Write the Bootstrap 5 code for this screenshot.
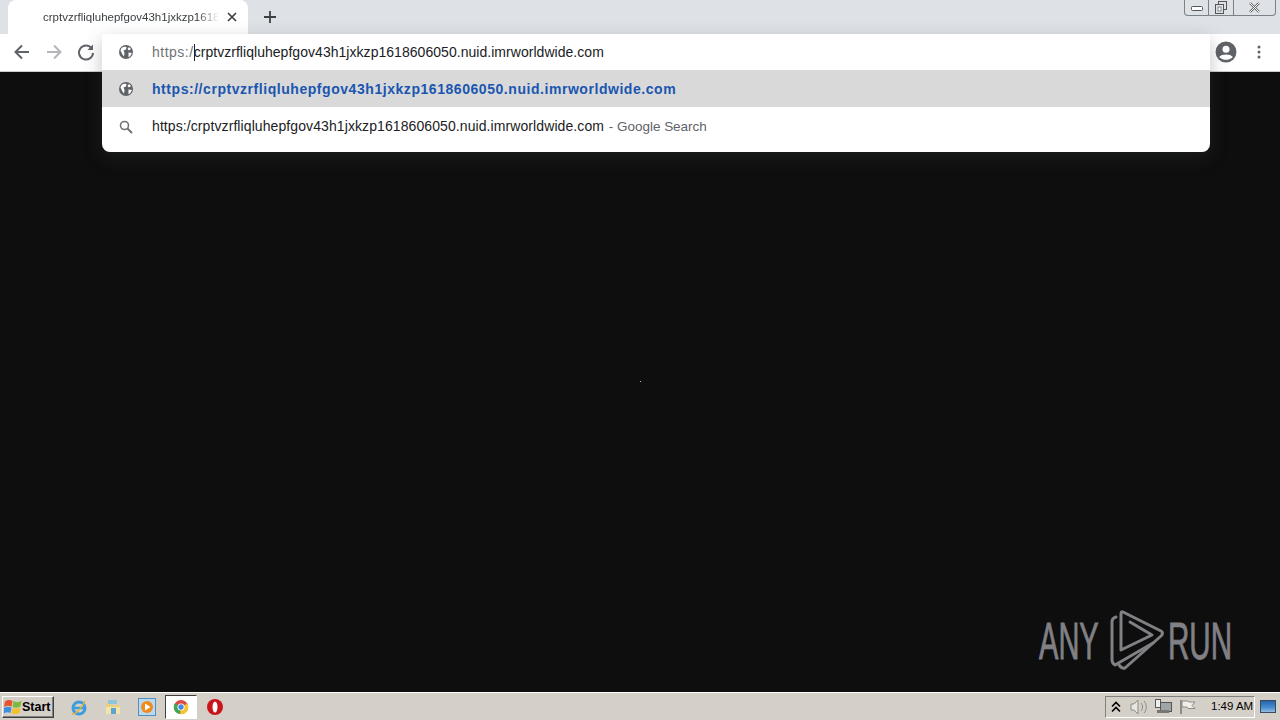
<!DOCTYPE html>
<html lang="en">
<head>
  <meta charset="UTF-8" />
  <meta name="viewport" content="width=device-width, initial-scale=1.0" />
  <title>crptvzrfliqluhepfgov43h1jxkzp1618606050.nuid.imrworldwide.com</title>
  <link href="https://cdn.jsdelivr.net/npm/bootstrap@5.3.3/dist/css/bootstrap.min.css" rel="stylesheet">
  <style>
    html, body { height: 100%; }
    body { font-family: "Liberation Sans", Arial, sans-serif; background: #0e0e0e; }
    .tab-strip { height: 34px; background: #dee1e6; padding-left: 8px; }
    .tab-item { width: 240px; height: 34px; background: #fff; border-radius: 8px 8px 0 0; padding-left: 35px; font-size: 11.5px; color: #3c4043; }
    .tab-title { width: 176px; padding-top: 1px; white-space: nowrap; overflow: hidden; -webkit-mask-image: linear-gradient(90deg, #000 88%, transparent); mask-image: linear-gradient(90deg, #000 88%, transparent); }
    .tab-close { margin-left: 7px; }
    .new-tab { margin-left: 14px; }
    .win-btns { height: 16px; margin-right: 4px; border: 1px solid #7c8087; border-top: 0; border-radius: 0 0 4px 4px; }
    .win-btn { height: 15px; border-right: 1px solid #7c8087; }
    .win-btn:last-child { border-right: 0; }
    .win-min { width: 24px; }
    .win-max { width: 25px; }
    .win-close { width: 41px; }
    .tool-bar { height: 38px; background: #fff; border-bottom: 1px solid #c9cbcf; padding-bottom: 2px; }
    .tool-icon { width: 22px; height: 22px; }
    .back-group { padding-left: 11px; gap: 10px; }
    .tool-end { margin-right: 19px; gap: 20px; }
    .screen-area { background: #0e0e0e; }
    .omni-panel { left: 102px; top: 34px; width: 1108px; background: #fff; border-radius: 0 0 8px 8px; box-shadow: 0 6px 18px rgba(60, 64, 67, .3); font-size: 14px; letter-spacing: .09px; z-index: 5; }
    .omni-row { height: 37px; padding-left: 16px; color: #202124; }
    .omni-row:first-child { height: 36px; }
    .omni-row:last-child { height: 45px; padding-bottom: 6px; }
    .omni-row.is-active { background: #d9d9d9; padding-top: 1px; }
    .omni-icon { width: 16px; height: 16px; margin-right: 18px; flex: none; }
    .scheme-dim { color: #6f7276; letter-spacing: .5px; }
    .caret-line { display: inline-block; width: 1px; height: 17px; background: #202124; vertical-align: -4px; margin: 0 -1px 0 0; }
    .host-tight { letter-spacing: .04px; }
    .omni-url { color: #1a56b0; font-weight: 700; font-size: 14px; letter-spacing: .55px; }
    .omni-hint { color: #5f6368; margin-left: 1px; font-size: 13.5px; letter-spacing: -.02px; }
    .dot-mark { left: 640px; top: 309px; width: 1px; height: 1px; background: #bbb; }
    .wm-mark { right: 43px; bottom: 18px; }
    .task-bar { height: 28px; background: #d4d0c8; border-top: 1px solid #fff; box-shadow: 0 -1px 0 #9a9a94; font-size: 12px; color: #000; }
    .start-btn { width: 52px; height: 22px; margin-left: 2px; background: #d4d0c8; border: 1px solid; border-color: #fff #404040 #404040 #fff; box-shadow: inset -1px -1px 0 #808080; font: 700 12.5px "Liberation Sans", Arial, sans-serif; padding: 0 0 0 1px; color: #000; gap: 0; }
    .quick-launch { margin-left: 16px; gap: 16px; }
    .quick-icon { width: 18px; height: 18px; flex: none; }
    .chrome-slot { width: 32px; height: 24px; margin: 0 -7px; background: #fff; border: 1px solid; border-color: #404040 #fff #fff #404040; }
    .chrome-icon { width: 16px; height: 16px; }
    .tray-box { width: 150px; height: 22px; margin-right: 5px; border: 1px solid; border-color: #808080 #fff #fff #808080; padding-left: 3px; gap: 7px; }
    .tray-chevron, .tray-speaker { margin-left: 2px; }
    .tray-clock { margin-left: 8px; font-size: 11.5px; white-space: nowrap; }
    .show-desk { margin-right: 4px; }
  </style>
</head>
<body class="d-flex flex-column overflow-hidden position-relative">

  <div class="tab-strip d-flex align-items-start flex-shrink-0">
    <div class="tab-item d-flex align-items-center">
      <div class="tab-title">crptvzrfliqluhepfgov43h1jxkzp1618606050.nuid.imrworldwide.com</div>
      <svg class="tab-close" width="12" height="12" viewBox="0 0 12 12"><path d="M2 2l8 8M10 2l-8 8" stroke="#3c4043" stroke-width="1.7"/></svg>
    </div>
    <svg class="new-tab mt-2" width="16" height="18" viewBox="0 0 16 18"><path d="M8 3v12M2 9h12" stroke="#3c4043" stroke-width="1.8"/></svg>
    <div class="win-btns d-flex ms-auto">
      <div class="win-btn win-min d-flex align-items-end justify-content-center pb-1"><svg width="12" height="5" viewBox="0 0 12 5"><rect x=".5" y=".5" width="11" height="4" rx="1" fill="#fff" stroke="#555"/></svg></div>
      <div class="win-btn win-max d-flex align-items-center justify-content-center"><svg width="12" height="13" viewBox="0 0 12 13"><rect x="3.5" y=".5" width="8" height="8" fill="none" stroke="#555"/><rect x=".5" y="3.5" width="8" height="9" fill="#dee1e6" stroke="#555"/><rect x="3" y="6" width="3" height="4" fill="#fff" stroke="#888"/></svg></div>
      <div class="win-btn win-close d-flex align-items-center justify-content-center"><svg width="13" height="11" viewBox="0 0 13 11"><path d="M2 1l9 9M11 1l-9 9" stroke="#666" stroke-width="2.4"/><path d="M2 1l9 9M11 1l-9 9" stroke="#fff" stroke-width="1"/></svg></div>
    </div>
  </div>

  <div class="tool-bar d-flex align-items-center flex-shrink-0">
    <div class="back-group d-flex align-items-center">
      <svg class="tool-icon" viewBox="0 0 22 22"><path d="M18 11H5M11 4.500L4.500 11l6.500 6.500" fill="none" stroke="#5f6368" stroke-width="2"/></svg>
      <svg class="tool-icon" viewBox="0 0 22 22"><path d="M4 11h13M11 4.500l6.500 6.500-6.500 6.500" fill="none" stroke="#b4b6ba" stroke-width="2"/></svg>
      <svg class="tool-icon" viewBox="0 0 22 22"><path d="M16.500 7.200A7 7 0 1 0 18 12" fill="none" stroke="#5f6368" stroke-width="2"/><path d="M18 3.500V9h-5.500z" fill="#5f6368"/></svg>
    </div>
    <div class="tool-end d-flex align-items-center ms-auto">
      <svg class="tool-icon" viewBox="0 0 20 20"><circle cx="10" cy="10" r="9.500" fill="#5f6368"/><circle cx="10" cy="7.500" r="3.200" fill="#fff"/><path d="M3.800 14.500c2-3 10.400-3 12.400 0-3 3.400-9.400 3.400-12.400 0z" fill="#fff"/></svg>
      <svg width="4" height="16" viewBox="0 0 4 16"><circle cx="2" cy="3" r="1.500" fill="#5f6368"/><circle cx="2" cy="8" r="1.500" fill="#5f6368"/><circle cx="2" cy="13" r="1.500" fill="#5f6368"/></svg>
    </div>
  </div>

  <div class="omni-panel position-absolute d-flex flex-column">
    <div class="omni-row d-flex align-items-center">
      <svg class="omni-icon" viewBox="0 0 16 16"><use href="#globe-ic"/></svg>
      <span><span class="scheme-dim">https:/</span><span class="caret-line"></span><span class="host-tight">crptvzrfliqluhepfgov43h1jxkzp1618606050.nuid.imrworldwide.com</span></span>
    </div>
    <div class="omni-row is-active d-flex align-items-center">
      <svg class="omni-icon" viewBox="0 0 16 16"><use href="#globe-ic"/></svg>
      <span class="omni-url">https://crptvzrfliqluhepfgov43h1jxkzp1618606050.nuid.imrworldwide.com</span>
    </div>
    <div class="omni-row d-flex align-items-center">
      <svg class="omni-icon" viewBox="0 0 16 16"><circle cx="6.500" cy="6.500" r="4" fill="none" stroke="#6f7276" stroke-width="1.600"/><path d="M9.500 9.500l4.500 4.500" stroke="#6f7276" stroke-width="2"/></svg>
      <span>https:/crptvzrfliqluhepfgov43h1jxkzp1618606050.nuid.imrworldwide.com<span class="omni-hint"> - Google Search</span></span>
    </div>
  </div>

  <svg width="0" height="0" class="position-absolute">
    <symbol id="globe-ic" viewBox="0 0 16 16">
      <circle cx="8" cy="8" r="7" fill="#5f6368"/>
      <path d="M3.500 4c1.500-1 3.500-1.500 5-1l-.5 2.500-2.500 1 1 2.500-.5 3.500C4.500 11.500 3.500 8 2.500 6.500zM11 3l2 2-2 1.500-1.500-1.500zM10.500 8.500l3.500.5-2 3.500-1.500.5z" fill="#fff"/>
    </symbol>
  </svg>

  <div class="screen-area flex-grow-1 position-relative">
    <div class="dot-mark position-absolute"></div>
    <svg class="wm-mark position-absolute" width="200" height="66" viewBox="0 0 200 66">
      <g font-family="Liberation Sans, Arial, sans-serif" font-size="51" fill="#808085" stroke="#808085" stroke-width=".9">
        <text transform="translate(2 51) scale(.57 1)">ANY</text>
        <text transform="translate(131 51) scale(.58 1)">RUN</text>
      </g>
      <g fill="none" stroke="#808085" stroke-width="3" stroke-linecap="round" stroke-linejoin="round">
        <path d="M79 9Q75 10 75 14V52Q75 55 78 57L116 35"/>
        <path d="M82 57Q85 61 88 60L124 28Q127 25 124 23L86 4Q84 3 84 6V42L115 27L93 14"/>
      </g>
    </svg>
  </div>

  <div class="task-bar d-flex align-items-center flex-shrink-0">
    <button class="start-btn d-flex align-items-center" type="button">
      <svg width="18" height="17" viewBox="0 0 18 17"><path d="M1 3.500C3 2 6 1.500 8.500 3L7.500 8.500C5 7.500 3 7.500 0 9z" fill="#e8522c"/><path d="M9.500 3c2.500 1.500 5 1.500 8 0L16.500 8.500c-3 1.500-5 1.500-8 .5z" fill="#7dba3c"/><path d="M0 10c3-1.500 5-1.500 7.500-.5L6.500 15c-2-1-4.500-1-7 .5z" fill="#3e8ede"/><path d="M8.500 10c3 1 5 1 8-.5l-1 5.500c-3 1.500-5 1.500-8 .5z" fill="#f5c02e"/></svg>
      Start
    </button>
    <div class="quick-launch d-flex align-items-center">
      <svg class="quick-icon" viewBox="0 0 18 18"><circle cx="9" cy="10" r="6" fill="none" stroke="#3d9be0" stroke-width="3"/><path d="M4 10h10" stroke="#3d9be0" stroke-width="2.500"/><path d="M2 16c3 1 10-6 13-13" fill="none" stroke="#e0b23a" stroke-width="1.500"/></svg>
      <svg class="quick-icon" viewBox="0 0 18 18"><path d="M2 5h5l1 2h8v9H2z" fill="#e9cf7e"/><rect x="2" y="9" width="14" height="7" fill="#f2e3a6"/><rect x="7" y="10" width="5" height="6" fill="#5ba3d0"/><rect x="4" y="2" width="9" height="4" fill="#8fc4de"/></svg>
      <svg class="quick-icon" viewBox="0 0 18 18"><rect x=".5" y=".5" width="17" height="17" fill="#bcd8ee" stroke="#4f8fc6"/><circle cx="9" cy="9" r="6" fill="#f08a1c"/><path d="M7 5.500l5.500 3.500L7 12.500z" fill="#fff"/></svg>
      <div class="chrome-slot d-flex align-items-center justify-content-center">
        <svg class="chrome-icon" viewBox="0 0 18 18"><circle cx="9" cy="9" r="8" fill="#dd4b3e"/><path d="M9 9L2 5a8 8 0 0 0 6 12z" fill="#3fa652"/><path d="M9 9l7-4a8 8 0 0 1-8 12z" fill="#f6c42d"/><circle cx="9" cy="9" r="4" fill="#fff"/><circle cx="9" cy="9" r="3" fill="#4a86e8"/></svg>
      </div>
      <svg class="quick-icon" viewBox="0 0 18 18"><circle cx="9" cy="9" r="8" fill="#c9141c"/><ellipse cx="9" cy="9" rx="2.500" ry="5.500" fill="#fff"/></svg>
    </div>
    <div class="tray-box d-flex align-items-center ms-auto">
      <svg class="tray-chevron" width="10" height="12" viewBox="0 0 10 12"><path d="M1 5.500l4-4 4 4M1 10.500l4-4 4 4" fill="none" stroke="#000" stroke-width="1.600"/></svg>
      <svg class="tray-speaker" width="18" height="16" viewBox="0 0 18 16"><path d="M1 5h3l4-4v14l-4-4H1z" fill="#e8e6e0" stroke="#8a8a86"/><path d="M11 4c2 2 2 6 0 8M14 2c3 3 3 9 0 12" fill="none" stroke="#8a8a86"/></svg>
      <svg width="17" height="16" viewBox="0 0 17 16"><rect x="5.500" y="3.500" width="11" height="9" fill="#9fa6a8" stroke="#555"/><rect x=".5" y=".5" width="5" height="8" fill="#eee" stroke="#555"/><path d="M2 11h12v3H2z" fill="#777"/></svg>
      <svg width="17" height="16" viewBox="0 0 17 16"><path d="M2 1v14" stroke="#777" stroke-width="1.500"/><path d="M3 2h6l1 1h6l-3 3.500 3 3H9L8 8H3z" fill="#efeee9" stroke="#8a8a86"/></svg>
      <span class="tray-clock">1:49 AM</span>
    </div>
    <svg class="show-desk" width="16" height="13" viewBox="0 0 16 13"><defs><linearGradient id="desk-fill" x1="0" y1="0" x2="0" y2="1"><stop offset="0" stop-color="#1d5fa8"/><stop offset=".6" stop-color="#4a8fd0"/><stop offset="1" stop-color="#a8c8e4"/></linearGradient></defs><rect width="16" height="13" fill="url(#desk-fill)"/><rect x=".5" y=".5" width="15" height="12" fill="none" stroke="#3a4a60"/></svg>
  </div>

</body>
</html>
